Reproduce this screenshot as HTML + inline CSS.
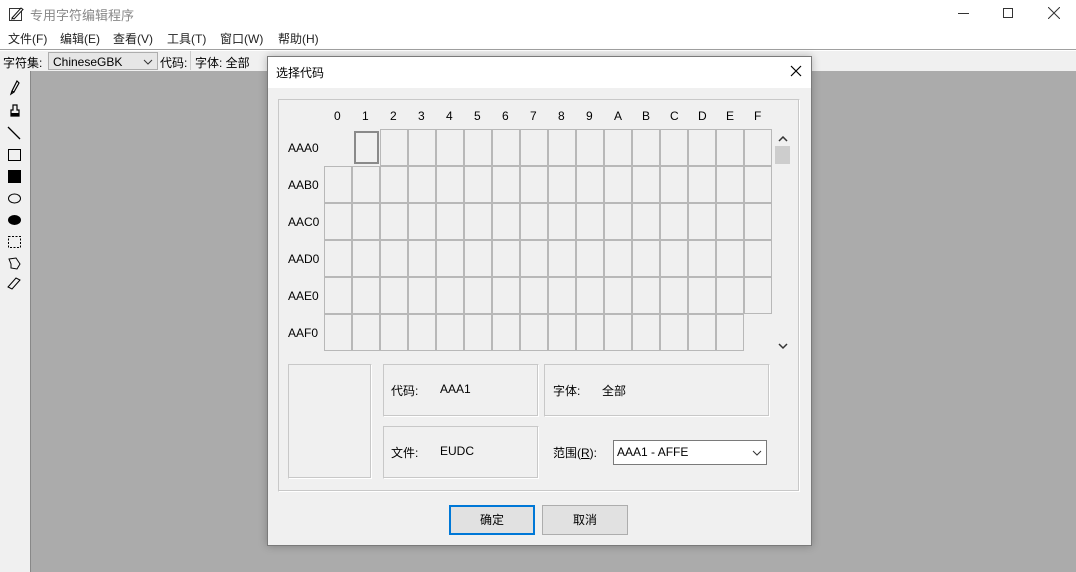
<!DOCTYPE html>
<html><head><meta charset="utf-8"><style>
*{margin:0;padding:0;box-sizing:border-box}
body{width:1076px;height:572px;position:relative;overflow:hidden;background:#fff;font-family:"Liberation Sans","Noto Sans CJK SC",sans-serif;font-size:12px;color:#000}
.a{position:absolute}
.cell{position:absolute;width:28px;height:37px;border:1px solid #b8b8b8;background:#f0f0f0}
.box{position:absolute;border:1px solid #c8c8c8;border-right-color:#fff;border-bottom-color:#fff;box-shadow:inset -1px -1px 0 #c8c8c8}
</style></head><body>
<svg class="a" style="left:8px;top:6px" width="16" height="16" viewBox="0 0 16 16"><rect x="1.5" y="2.5" width="12" height="12" fill="none" stroke="#333"/><path d="M4 12 L13 2 L15 3.5 L6 13 Z" fill="#fff" stroke="#111"/><path d="M4 12 l-1 2 2-1" fill="#111"/></svg>
<div class="a" style="left:30px;top:5px;color:#888;font-size:13px">专用字符编辑程序</div>
<div class="a" style="left:958px;top:13px;width:11px;height:1px;background:#333"></div>
<div class="a" style="left:1003px;top:8px;width:10px;height:10px;border:1px solid #333"></div>
<svg class="a" style="left:1048px;top:7px" width="12" height="12"><path d="M0 0L12 12M12 0L0 12" stroke="#333"/></svg>
<div class="a" style="left:8px;top:30px;color:#222">文件(F)</div>
<div class="a" style="left:60px;top:30px;color:#222">编辑(E)</div>
<div class="a" style="left:113px;top:30px;color:#222">查看(V)</div>
<div class="a" style="left:167px;top:30px;color:#222">工具(T)</div>
<div class="a" style="left:220px;top:30px;color:#222">窗口(W)</div>
<div class="a" style="left:278px;top:30px;color:#222">帮助(H)</div>
<div class="a" style="left:0;top:49px;width:1076px;height:1px;background:#a0a0a0"></div>
<div class="a" style="left:0;top:50px;width:1076px;height:21px;background:#f0f0f0;border-top:1px solid #fff"></div>
<div class="a" style="left:3px;top:54px">字符集:</div>
<div class="a" style="left:48px;top:52px;width:110px;height:18px;border:1px solid #adadad;background:#e6e6e6;padding:2px 4px">ChineseGBK</div>
<svg class="a" style="left:143px;top:59px" width="10" height="6"><path d="M1 1L5 5L9 1" fill="none" stroke="#333"/></svg>
<div class="a" style="left:160px;top:54px">代码:</div>
<div class="a" style="left:190px;top:51px;width:1px;height:19px;background:#ccc"></div>
<div class="a" style="left:195px;top:54px">字体: 全部</div>
<div class="a" style="left:0;top:71px;width:1076px;height:501px;background:#ababab"></div>
<div class="a" style="left:0;top:71px;width:31px;height:501px;background:#f0f0f0;border-right:1px solid #888"></div>
<svg class="a" style="left:5px;top:78px" width="20" height="220">
<path d="M12 3 L14 5 L9 14 L7 13 Z M7 13 L6 16 L9 14" fill="none" stroke="#000" stroke-width="1.2"/>
<path d="M8 27h4v5h2v6h-8v-6h2z" fill="none" stroke="#000" stroke-width="1.2"/><rect x="6" y="35" width="8" height="3"/>
<path d="M3 49 L15 61" stroke="#000" stroke-width="1.3"/>
<rect x="3.5" y="71.5" width="12" height="11" fill="none" stroke="#000"/>
<rect x="3" y="92" width="13" height="13" fill="#000"/>
<ellipse cx="9.5" cy="120.5" rx="6" ry="4.5" fill="none" stroke="#000"/>
<ellipse cx="9.5" cy="142" rx="6.5" ry="5" fill="#000"/>
<rect x="3.5" y="158.5" width="12" height="11" fill="none" stroke="#000" stroke-dasharray="2,1.5"/>
<path d="M4 181 L11 180 L15 186 L12 191 L6 190 L6 186 Z" fill="none" stroke="#000"/>
<path d="M3 209 L11 200 L15 202 L7 211 Z" fill="none" stroke="#000"/>
</svg>
<div class="a" style="left:267px;top:56px;width:545px;height:490px;background:#f0f0f0;border:1px solid #7a7a7a;box-shadow:0 0 8px rgba(0,0,0,.25)"></div>
<div class="a" style="left:268px;top:57px;width:543px;height:31px;background:#fff"></div>
<div class="a" style="left:276px;top:64px">选择代码</div>
<svg class="a" style="left:790px;top:65px" width="12" height="12"><path d="M1 1L11 11M11 1L1 11" stroke="#000" stroke-width="1.2"/></svg>
<div class="box" style="left:278px;top:99px;width:522px;height:393px"></div>
<div class="a" style="left:0;top:109px;width:1076px;height:0">
<span class="a" style="left:334px">0</span><span class="a" style="left:362px">1</span><span class="a" style="left:390px">2</span><span class="a" style="left:418px">3</span><span class="a" style="left:446px">4</span><span class="a" style="left:474px">5</span><span class="a" style="left:502px">6</span><span class="a" style="left:530px">7</span><span class="a" style="left:558px">8</span><span class="a" style="left:586px">9</span><span class="a" style="left:614px">A</span><span class="a" style="left:642px">B</span><span class="a" style="left:670px">C</span><span class="a" style="left:698px">D</span><span class="a" style="left:726px">E</span><span class="a" style="left:754px">F</span>
</div>
<div class="a" style="left:288px;top:141px">AAA0</div>
<div class="a" style="left:288px;top:178px">AAB0</div>
<div class="a" style="left:288px;top:215px">AAC0</div>
<div class="a" style="left:288px;top:252px">AAD0</div>
<div class="a" style="left:288px;top:289px">AAE0</div>
<div class="a" style="left:288px;top:326px">AAF0</div>
<div id="g"></div>
<script>
var h='';for(var r=0;r<6;r++)for(var c=0;c<16;c++){if(r==0&&c==0)continue;if(r==5&&c==15)continue;
h+='<div class="cell" style="left:'+(324+c*28)+'px;top:'+(129+r*37)+'px'+(r==0&&c==1?';border:2px solid #8a8a8a;left:354px;top:131px;width:25px;height:33px':'')+'"></div>';}
document.getElementById('g').innerHTML=h;
</script>
<svg class="a" style="left:778px;top:136px" width="10" height="7"><path d="M1 5L5 1L9 5" fill="none" stroke="#333" stroke-width="1.5"/></svg>
<div class="a" style="left:775px;top:146px;width:15px;height:18px;background:#cdcdcd"></div>
<svg class="a" style="left:778px;top:343px" width="10" height="7"><path d="M1 1L5 5L9 1" fill="none" stroke="#333" stroke-width="1.5"/></svg>
<div class="box" style="left:288px;top:364px;width:84px;height:115px"></div>
<div class="box" style="left:383px;top:364px;width:156px;height:53px"></div>
<div class="box" style="left:544px;top:364px;width:226px;height:53px"></div>
<div class="box" style="left:383px;top:426px;width:156px;height:53px"></div>
<div class="a" style="left:391px;top:382px">代码:</div><div class="a" style="left:440px;top:382px">AAA1</div>
<div class="a" style="left:553px;top:382px">字体:</div><div class="a" style="left:602px;top:382px">全部</div>
<div class="a" style="left:391px;top:444px">文件:</div><div class="a" style="left:440px;top:444px">EUDC</div>
<div class="a" style="left:553px;top:444px">范围(<u>R</u>):</div>
<div class="a" style="left:613px;top:440px;width:154px;height:25px;background:#fff;border:1px solid #7a7a7a;padding:4px 3px">AAA1 - AFFE</div>
<svg class="a" style="left:752px;top:450px" width="10" height="6"><path d="M1 1L5 5L9 1" fill="none" stroke="#333"/></svg>
<div class="a" style="left:449px;top:505px;width:86px;height:30px;background:#e1e1e1;border:2px solid #0078d7;text-align:center;line-height:26px">确定</div>
<div class="a" style="left:542px;top:505px;width:86px;height:30px;background:#e1e1e1;border:1px solid #adadad;text-align:center;line-height:28px">取消</div>
</body></html>
